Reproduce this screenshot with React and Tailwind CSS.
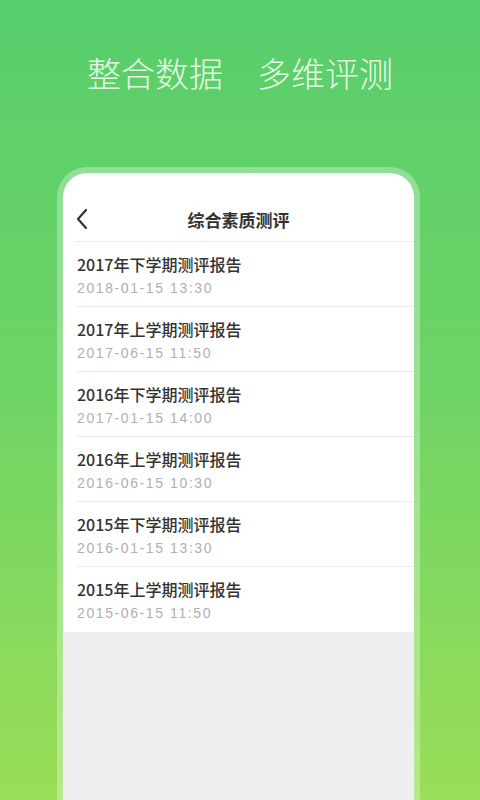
import React from 'react';

const reports = [
  { title: '2017年下学期测评报告', time: '2018-01-15 13:30' },
  { title: '2017年上学期测评报告', time: '2017-06-15 11:50' },
  { title: '2016年下学期测评报告', time: '2017-01-15 14:00' },
  { title: '2016年上学期测评报告', time: '2016-06-15 10:30' },
  { title: '2015年下学期测评报告', time: '2016-01-15 13:30' },
  { title: '2015年上学期测评报告', time: '2015-06-15 11:50' },
];

function ReportRow({ title, time, last }) {
  return (
    <div className="h-[65px] pl-[14px] flex flex-col">
      <div className={`flex-1 flex flex-col justify-center pt-[2px] ${last ? '' : 'border-b border-[#ececec]'}`}>
        <p className="text-[16px] leading-[22px] font-medium text-[#333]">{title}</p>
        <p
          className="text-[14px] leading-[20px] mt-[3px] tracking-[1.6px] text-[#b0b0b0]"
          style={{ fontFamily: '"Liberation Sans", Arial, sans-serif' }}
        >
          {time}
        </p>
      </div>
    </div>
  );
}

export default function App() {
  return (
    <div
      className="w-[480px] h-[800px] overflow-hidden flex flex-col bg-gradient-to-b from-[#57cd6c] via-[#6fd465] to-[#99de57]"
      style={{ fontFamily: '"Noto Sans CJK SC", "Noto Sans", sans-serif' }}
    >
      <h1 className="pt-[52px] text-center text-[34px] leading-[42px] font-light text-[#e6f8e4]">
        整合数据　多维评测
      </h1>

      <div className="mt-[73px] ml-[57px] w-[363px] flex-1 flex flex-col rounded-t-[30px] border-[6px] border-b-0 border-white/30">
        <div className="flex-1 flex flex-col rounded-t-[24px] bg-white overflow-hidden">
          <div className="h-[68px] relative flex items-center justify-center">
            <svg
              className="absolute left-[12px] top-[35px]"
              width="14"
              height="22"
              viewBox="0 0 14 22"
              fill="none"
              stroke="#333"
              strokeWidth="2.2"
              strokeLinecap="round"
              strokeLinejoin="round"
            >
              <path d="M11 2 L3 11 L11 20" />
            </svg>
            <span className="mt-[25px] text-[17px] font-bold text-[#333]">综合素质测评</span>
          </div>
          <div className="ml-[12px] border-b border-[#ececec]" />
          {reports.map((r, i) => (
            <ReportRow key={r.title} {...r} last={i === reports.length - 1} />
          ))}
          <div className="flex-1 bg-[#efefef]" />
        </div>
      </div>
    </div>
  );
}
